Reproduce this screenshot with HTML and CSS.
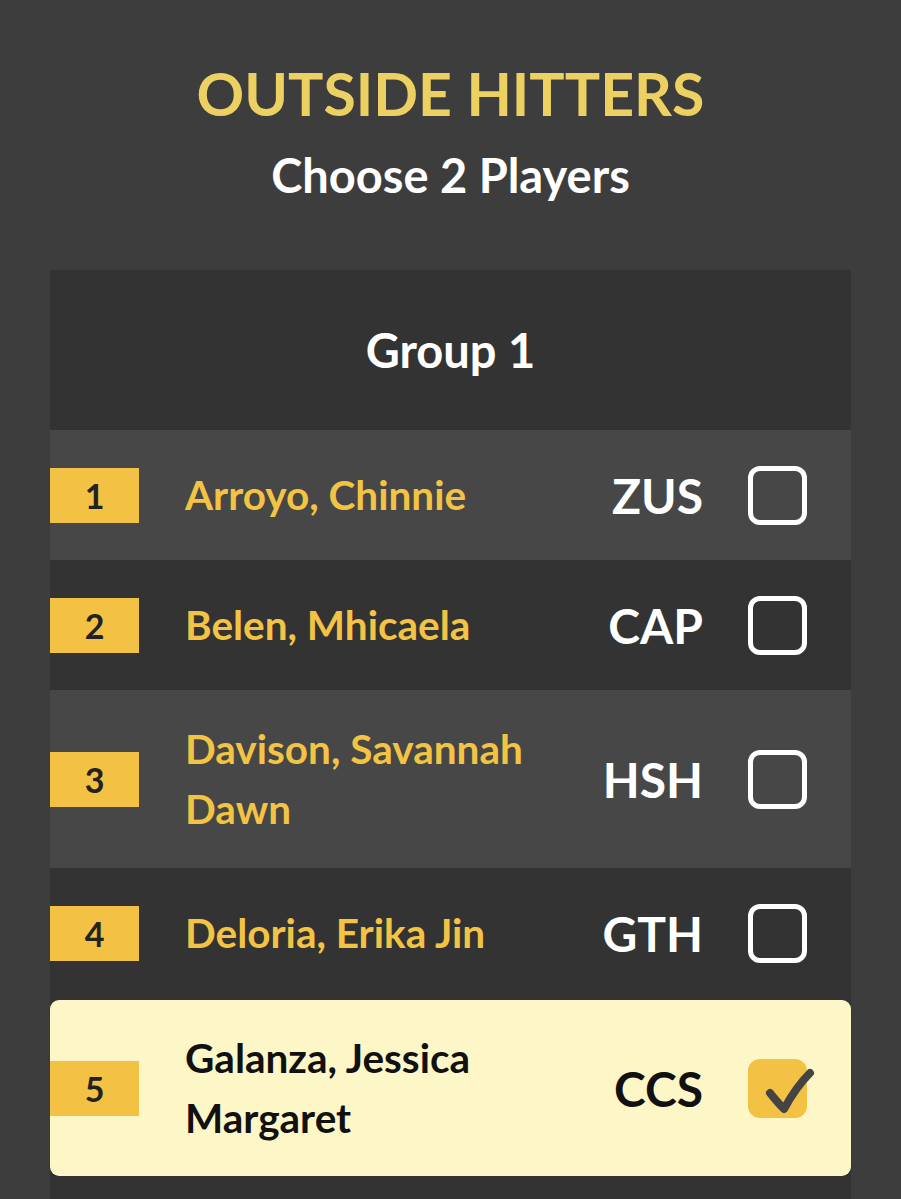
FILE: index.html
```html
<!DOCTYPE html>
<html>
<head>
<meta charset="utf-8">
<link rel="stylesheet" href="styles.css">
</head>
<body>
<div class="page">
  <header class="head">
    <h1 class="title">OUTSIDE HITTERS</h1>
    <p class="subtitle">Choose 2 Players</p>
  </header>
  <section class="panel">
    <div class="group-head">Group 1</div>
    <div class="row light">
      <div class="badge">1</div>
      <div class="name">Arroyo, Chinnie</div>
      <div class="team">ZUS</div>
      <div class="box"></div>
    </div>
    <div class="row dark">
      <div class="badge">2</div>
      <div class="name">Belen, Mhicaela</div>
      <div class="team">CAP</div>
      <div class="box"></div>
    </div>
    <div class="row light">
      <div class="badge">3</div>
      <div class="name">Davison, Savannah Dawn</div>
      <div class="team">HSH</div>
      <div class="box"></div>
    </div>
    <div class="row dark">
      <div class="badge">4</div>
      <div class="name">Deloria, Erika Jin</div>
      <div class="team">GTH</div>
      <div class="box"></div>
    </div>
    <div class="row selected">
      <div class="badge">5</div>
      <div class="name">Galanza, Jessica Margaret</div>
      <div class="team">CCS</div>
      <div class="box checked">
        <svg class="check" viewBox="0 0 70 60" width="70" height="60"><path d="M22 34 Q30 44 36 50 Q48 28 62 14" fill="none" stroke="#444444" stroke-width="8" stroke-linecap="round" stroke-linejoin="round"/></svg>
      </div>
    </div>
    <div class="row dark tail"></div>
  </section>
</div>
</body>
</html>
```

FILE: styles.css
```css
html, body {
  margin: 0;
  padding: 0;
  background: #3d3d3d;
}
body {
  font-family: Lato, "Open Sans", sans-serif;
  font-weight: 700;
}
.page {
  padding: 0 50px;
}
.head {
  text-align: center;
  padding-top: 59px;
  height: 270px;
  box-sizing: border-box;
}
.title {
  margin: 0;
  font-size: 59px;
  line-height: 70px;
  color: #ecd061;
  font-weight: 700;
}
.subtitle {
  margin: 18px 0 0;
  font-size: 47px;
  line-height: 56px;
  color: #ffffff;
}
.panel {
  background: #333333;
}
.group-head {
  height: 160px;
  display: flex;
  align-items: center;
  justify-content: center;
  color: #ffffff;
  font-size: 47px;
}
.row {
  display: flex;
  align-items: center;
  min-height: 130px;
  box-sizing: border-box;
  padding: 29px 44px 29px 0;
}
.row.light { background: #474747; }
.row.dark { background: #333333; }
.row.selected {
  background: #fdf7c8;
  border-radius: 9px;
  min-height: 176px;
  margin-top: 2px;
  padding: 28px 44px 28px 0;
  box-shadow: 0 1px 1px rgba(0, 0, 0, 0.6);
}
.row.tail {
  min-height: 60px;
  padding: 0;
}
.badge {
  width: 89px;
  height: 55px;
  flex: none;
  background: #f3c143;
  color: #222222;
  font-size: 34px;
  display: flex;
  align-items: center;
  justify-content: center;
}
.name {
  flex: 1;
  margin-left: 46px;
  color: #f3c343;
  font-size: 40.5px;
  line-height: 60px;
  padding-right: 10px;
}
.selected .name { color: #111111; }
.team {
  width: 130px;
  flex: none;
  text-align: right;
  color: #ffffff;
  font-size: 48px;
  margin-right: 45px;
}
.selected .team { color: #111111; }
.box {
  width: 59px;
  height: 59px;
  flex: none;
  box-sizing: border-box;
  border: 5px solid #ffffff;
  border-radius: 12px;
  position: relative;
}
.box.checked {
  border: none;
  background: #f3c143;
}
.check {
  position: absolute;
  left: 0;
  top: 0;
  overflow: visible;
}
```
